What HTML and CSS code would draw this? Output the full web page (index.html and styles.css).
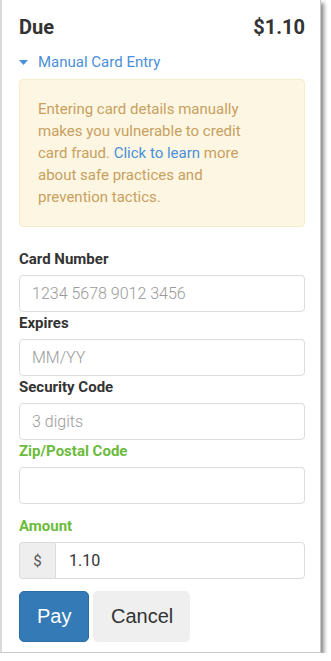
FILE: index.html
```html
<!DOCTYPE html>
<html lang="en">

<head>
    <meta charset="UTF-8">
    <meta name="viewport" content="width=device-width, initial-scale=1.0">
    <title>Payment</title>
    <link rel="stylesheet" href="styles.css">
</head>

<body>
    <div class="panel">
        <header class="due-row">
            <span>Due</span>
            <span>$1.10</span>
        </header>

        <a class="toggle" href="#">
            <svg class="caret" width="9" height="5" viewBox="0 0 9 5"><path d="M0 0h9L4.5 5z" fill="currentColor"/></svg>
            Manual Card Entry
        </a>

        <div class="alert">
            Entering card details manually makes you vulnerable to credit card fraud. <a href="#">Click to learn</a> more about safe practices and prevention tactics.
        </div>

        <form class="card-form">
            <label for="cardNumber">Card Number</label>
            <input type="text" id="cardNumber" placeholder="1234 5678 9012 3456">

            <label for="expires">Expires</label>
            <input type="text" id="expires" placeholder="MM/YY">

            <label for="cvc">Security Code</label>
            <input type="text" id="cvc" placeholder="3 digits">

            <label for="zip" class="required">Zip/Postal Code</label>
            <input type="text" id="zip" class="last-field">

            <label for="amount" class="required">Amount</label>
            <div class="input-group">
                <span class="addon">$</span>
                <input type="text" id="amount" value="1.10">
            </div>

            <div class="actions">
                <button type="submit" class="btn btn-pay">Pay</button>
                <button type="button" class="btn btn-cancel">Cancel</button>
            </div>
        </form>
    </div>
</body>

</html>
```

FILE: styles.css
```css
body {
    margin: 0;
    padding: 0;
    background-color: white;
    font-family: Roboto, "Liberation Sans", sans-serif;
    color: #333;
}

.panel {
    width: 321px;
    height: 653px;
    box-sizing: border-box;
    padding: 13px 15px 11px 17px;
    background-color: white;
    border-left: 2px solid #d9d9d9;
    border-right: 1px solid #c8c8c8;
    border-bottom: 1px solid #c8c8c8;
    box-shadow: 3px 3px 4px rgba(0, 0, 0, 0.45);
}

.due-row {
    display: flex;
    justify-content: space-between;
    font-size: 20px;
    font-weight: bold;
    line-height: 28px;
    color: #333;
}

.toggle {
    display: flex;
    align-items: center;
    gap: 10px;
    margin-top: 11px;
    font-size: 15px;
    line-height: 20px;
    color: #4a90d9;
    text-decoration: none;
}

.caret {
    margin-top: 1px;
}

.alert {
    margin-top: 7px;
    padding: 18px 34px 18px 18px;
    background-color: #fcf6e2;
    border: 1px solid #f8eccd;
    border-radius: 4px;
    font-size: 15px;
    line-height: 22px;
    color: #c8a060;
}

.alert a {
    color: #4a90d9;
    text-decoration: none;
}

.card-form {
    margin-top: 21px;
}

label {
    display: block;
    font-size: 15px;
    font-weight: bold;
    line-height: 22px;
    margin-bottom: 5px;
}

label.required {
    color: #6cbb3c;
}

input[type="text"] {
    display: block;
    width: 100%;
    height: 37px;
    padding: 0 12px;
    border: 1px solid #dcdcdc;
    border-radius: 4px;
    box-sizing: border-box;
    font-family: Roboto, "Liberation Sans", sans-serif;
    font-size: 16px;
    color: #333;
    outline: none;
}

input::placeholder {
    color: #9a9a9a;
    font-weight: 300;
}

.last-field {
    margin-bottom: 11px;
}

.input-group {
    display: flex;
}

.addon {
    width: 36px;
    height: 37px;
    box-sizing: border-box;
    display: flex;
    align-items: center;
    justify-content: center;
    background-color: #eee;
    border: 1px solid #dcdcdc;
    border-right: none;
    border-radius: 4px 0 0 4px;
    font-size: 15px;
    color: #555;
}

.input-group input[type="text"] {
    flex: 1;
    border-radius: 0 4px 4px 0;
    padding-left: 13px;
}

.actions {
    display: flex;
    gap: 4px;
    margin-top: 12px;
}

.btn {
    height: 51px;
    padding: 0 17px;
    border-radius: 5px;
    font-family: "Liberation Sans", Arial, sans-serif;
    font-size: 20px;
    cursor: pointer;
}

.btn-pay {
    width: 70px;
    background-color: #337ab7;
    border: 1px solid #2e6da4;
    color: white;
}

.btn-cancel {
    width: 97px;
    background-color: #efefef;
    border: 1px solid #efefef;
    color: #333;
}
```
